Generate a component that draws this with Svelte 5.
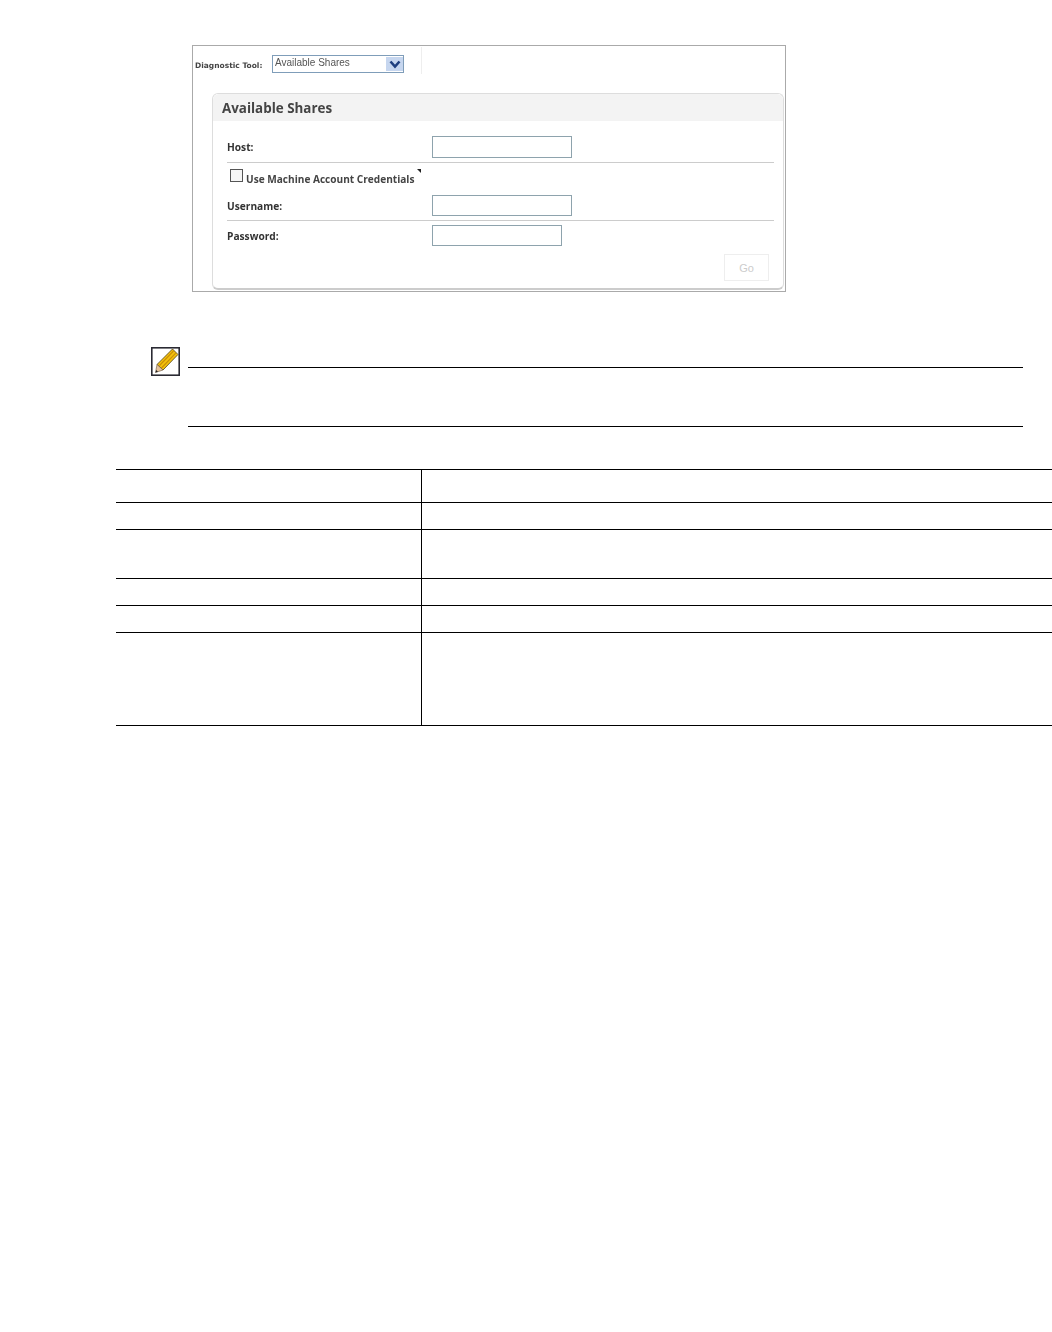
<script>
  const rows = [33, 27, 49, 27, 27, 93];
</script>

<div class="page">
  <div class="shot">
    <div class="tool">
      <span class="tool-label">Diagnostic Tool:</span>
      <div class="select">
        <span>Available Shares</span>
        <span class="arrow">
          <svg width="12" height="9" viewBox="0 0 12 9"><path d="M1.5 1.5 L6 6.5 L10.5 1.5" fill="none" stroke="#1f3f7f" stroke-width="2.6"/></svg>
        </span>
      </div>
      <div class="tool-end"></div>
    </div>

    <div class="panel">
      <div class="panel-title">Available Shares</div>
      <div class="row host">
        <label for="host">Host:</label>
        <input id="host" class="wide tall" type="text" />
      </div>
      <div class="check-row">
        <span class="box"></span>
        <span class="check-label">Use Machine Account Credentials</span>
        <span class="mark"></span>
      </div>
      <div class="row user">
        <label for="user">Username:</label>
        <input id="user" class="wide" type="text" />
      </div>
      <div class="row pass">
        <label for="pass">Password:</label>
        <input id="pass" class="narrow" type="text" />
      </div>
      <div class="actions"><button disabled>Go</button></div>
    </div>
  </div>

  <div class="note">
    <svg class="pencil" width="29" height="29" viewBox="0 0 29 29">
      <rect x="0.8" y="0.8" width="27.4" height="27.4" fill="#fff" stroke="#2a2a33" stroke-width="1.6"/>
      <path d="M21.5 2 L27 7.5 L12 23 L6 17.5 Z" fill="#f4c20d" stroke="#4a3c14" stroke-width="0.8"/>
      <path d="M22.5 4 L8.5 18.5 M24.7 6.2 L10.5 21" stroke="#c98f08" stroke-width="1.2"/>
      <path d="M6 17.5 L12 23 L4.5 25.5 Z" fill="#e6c39c" stroke="#6a5540" stroke-width="0.6"/>
      <path d="M5.2 23 L7 24.7 L4.5 25.5 Z" fill="#222"/>
    </svg>
    <div class="note-body"></div>
  </div>

  <div class="table">
    {#each rows as h}
      <div class="cell left" style="height: {h}px"></div>
      <div class="cell right" style="height: {h}px"></div>
    {/each}
  </div>
</div>

<style>
  :global(body) {
    margin: 0;
    background: #fff;
  }
  .page {
    width: 1052px;
    height: 1332px;
    overflow: hidden;
    padding-top: 45px;
    box-sizing: border-box;
    font-family: "DejaVu Sans", sans-serif;
  }
  .shot {
    width: 594px;
    height: 247px;
    margin-left: 192px;
    border: 1px solid #aaa;
    box-sizing: border-box;
    padding: 0 1px 1px 19px;
    color: #444;
    display: flex;
    flex-direction: column;
  }
  .tool {
    height: 47px;
    margin-left: -19px;
    display: flex;
    align-items: flex-start;
    flex: none;
    filter: blur(0.4px);
  }
  .tool-label {
    margin: 15px 0 0 2px;
    width: 77px;
    font-size: 7.5px;
    font-weight: 700;
    line-height: 9px;
    white-space: nowrap;
  }
  .select {
    margin-top: 9px;
    width: 132px;
    height: 18px;
    box-sizing: border-box;
    border: 1px solid #7f9db9;
    padding-left: 2px;
    font-family: "Liberation Sans", sans-serif;
    font-size: 10px;
    line-height: 14px;
    color: #555;
    display: flex;
    justify-content: space-between;
  }
  .arrow {
    width: 17px;
    height: 14px;
    margin: 1px 0 0 0;
    background: #c6d6ef;
    display: flex;
    align-items: center;
    justify-content: center;
  }
  .tool-end {
    width: 1px;
    height: 27px;
    margin: 1px 0 0 17px;
    background: #eee;
  }
  .panel {
    width: 572px;
    height: 197px;
    box-sizing: border-box;
    border: 1px solid #ddd;
    border-bottom: 2px solid #ccc;
    border-radius: 6px;
    position: relative;
    padding-left: 14px;
    filter: blur(0.4px);
  }
  .panel-title {
    margin-left: -14px;
    height: 27px;
    padding-left: 9px;
    background: #f3f3f3;
    border-radius: 6px 6px 0 0;
    font-size: 13.4px;
    font-weight: 700;
    line-height: 29px;
    font-family: "Open Sans", sans-serif;
    color: #444;
  }
  .row {
    width: 547px;
    display: flex;
    align-items: center;
    box-sizing: border-box;
  }
  .row label {
    width: 205px;
    font-size: 10.2px;
    font-weight: 700;
    font-family: "Open Sans", sans-serif;
    color: #333;
  }
  .host {
    height: 42px;
    padding-top: 10px;
    border-bottom: 1px solid #ccc;
  }
  .user {
    height: 30px;
    border-bottom: 1px solid #ccc;
  }
  .pass {
    height: 29px;
  }
  input {
    height: 21px;
    box-sizing: border-box;
    border: 1px solid #8ea3ad;
    background: #fff;
    padding: 0;
    outline: none;
  }
  .tall { height: 22px; }
  .wide { width: 140px; }
  .narrow { width: 130px; }
  .check-row {
    height: 28px;
    display: flex;
    align-items: center;
    padding-left: 3px;
    color: #333;
  }
  .box {
    width: 13px;
    height: 13px;
    box-sizing: border-box;
    border: 1px solid #555;
    background: #f6f6f6;
    margin-top: -4px;
  }
  .check-label {
    margin: 3px 0 0 3px;
    font-size: 10.1px;
    font-weight: 700;
    font-family: "Open Sans", sans-serif;
    color: #444;
    white-space: nowrap;
  }
  .mark {
    width: 0;
    height: 0;
    margin: -13px 0 0 3px;
    border-top: 4px solid #222;
    border-left: 4px solid transparent;
  }
  .actions {
    display: flex;
    justify-content: flex-end;
    width: 542px;
    margin-top: 4px;
  }
  button {
    width: 45px;
    height: 27px;
    border: 1px solid #eee;
    background: #fff;
    color: #ccc;
    font-family: "Liberation Sans", sans-serif;
    font-size: 11px;
    padding: 0;
  }
  .note {
    display: flex;
    margin: 55px 0 0 151px;
    height: 80px;
  }
  .pencil {
    flex: none;
  }
  .note-body {
    width: 835px;
    height: 60px;
    box-sizing: border-box;
    margin: 20px 0 0 8px;
    border-top: 1px solid #000;
    border-bottom: 1px solid #000;
  }
  .table {
    margin: 42px 0 0 116px;
    width: 936px;
    display: grid;
    grid-template-columns: 306px 1fr;
    border-bottom: 1px solid #000;
  }
  .cell {
    border-top: 1px solid #000;
    box-sizing: border-box;
  }
  .left {
    border-right: 1px solid #000;
  }
</style>
